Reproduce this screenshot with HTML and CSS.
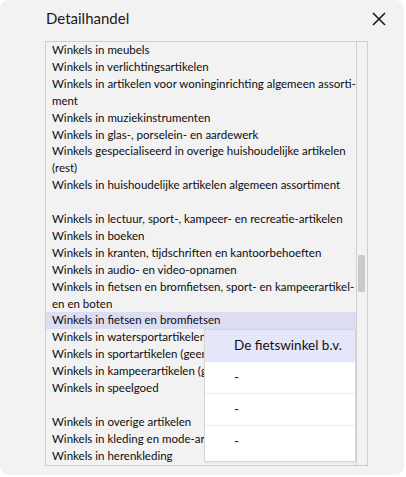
FILE: index.html
```html
<!DOCTYPE html>
<html lang="nl">
<head>
<meta charset="utf-8">
<link rel="stylesheet" href="styles.css">
</head>
<body>
<div class="dialog">
  <div class="header">
    <span class="title">Detailhandel</span>
    <svg class="close" width="14" height="14" viewBox="0 0 14 14"><path d="M1 1 L13 13 M13 1 L1 13" stroke="#1a1a1a" stroke-width="1.6" fill="none"/></svg>
  </div>
  <div class="listbox">
    <div class="list">
      <div class="items">
        <div class="item">Winkels in meubels</div>
        <div class="item">Winkels in verlichtingsartikelen</div>
        <div class="item">Winkels in artikelen voor woninginrichting algemeen assorti-<br>ment</div>
        <div class="item">Winkels in muziekinstrumenten</div>
        <div class="item">Winkels in glas-, porselein- en aardewerk</div>
        <div class="item">Winkels gespecialiseerd in overige huishoudelijke artikelen<br>(rest)</div>
        <div class="item">Winkels in huishoudelijke artikelen algemeen assortiment</div>
        <div class="item blank"></div>
        <div class="item">Winkels in lectuur, sport-, kampeer- en recreatie-artikelen</div>
        <div class="item">Winkels in boeken</div>
        <div class="item">Winkels in kranten, tijdschriften en kantoorbehoeften</div>
        <div class="item">Winkels in audio- en video-opnamen</div>
        <div class="item">Winkels in fietsen en bromfietsen, sport- en kampeerartikel-<br>en en boten</div>
        <div class="item selected">Winkels in fietsen en bromfietsen</div>
        <div class="item">Winkels in watersportartikelen</div>
        <div class="item">Winkels in sportartikelen (geen kampeerartikelen)</div>
        <div class="item">Winkels in kampeerartikelen (geen caravans)</div>
        <div class="item">Winkels in speelgoed</div>
        <div class="item blank"></div>
        <div class="item">Winkels in overige artikelen</div>
        <div class="item">Winkels in kleding en mode-artikelen</div>
        <div class="item">Winkels in herenkleding</div>
      </div>
      <div class="popup">
        <div class="prow active">De fietswinkel b.v.</div>
        <div class="prow">-</div>
        <div class="prow">-</div>
        <div class="prow last">-</div>
      </div>
    </div>
    <div class="scrollbar"><div class="thumb"></div></div>
  </div>
</div>
</body>
</html>
```
FILE: styles.css
```css
html, body {
  margin: 0;
  padding: 0;
  background: #ffffff;
}
body {
  font-family: "Lato", "Liberation Sans", sans-serif;
  color: #111;
}
.dialog {
  width: 404px;
  height: 475px;
  background: #f2f2f2;
  border-radius: 9px;
  box-sizing: border-box;
  padding: 0 0 0 45px;
  overflow: hidden;
}
.header {
  height: 41px;
  display: flex;
  align-items: flex-start;
  justify-content: space-between;
  padding-right: 18px;
}
.title {
  font-size: 15px;
  margin-top: 9px;
  margin-left: 1px;
  color: #1a1a1a;
}
.close {
  margin-top: 12px;
}
.listbox {
  width: 323px;
  height: 425px;
  box-sizing: border-box;
  border: 1px solid #cfcfcf;
  display: flex;
  overflow: hidden;
}
.list {
  flex: 1;
  position: relative;
  overflow: hidden;
}
.items {
  margin-top: 0;
}
.item {
  font-size: 11.5px;
  line-height: 16.9px;
  padding-left: 6px;
  white-space: nowrap;
  color: #0d0d0d;
}
.item.blank {
  height: 16.9px;
}
.item.selected {
  background: #dcdcf2;
}
.scrollbar {
  width: 10px;
  border-left: 1px solid #cfcfcf;
  position: relative;
}
.thumb {
  position: absolute;
  left: 1px;
  top: 213px;
  width: 7px;
  height: 37px;
  background: #c9c9c9;
  border-radius: 2px;
}
.popup {
  position: absolute;
  left: 158px;
  top: 287px;
  width: 152px;
  box-sizing: border-box;
  border: 1px solid #d6d6d6;
  background: #ffffff;
  padding-bottom: 3px;
  box-shadow: 0 1px 2px rgba(0,0,0,0.06);
}
.prow {
  height: 32px;
  box-sizing: border-box;
  border-bottom: 1px solid #ececec;
  padding-left: 29px;
  font-size: 13.5px;
  line-height: 30px;
}
.prow.active {
  background: #e6e6fa;
  border-bottom-color: #e0e0ee;
}
.prow.last {
  border-bottom: none;
}
```
